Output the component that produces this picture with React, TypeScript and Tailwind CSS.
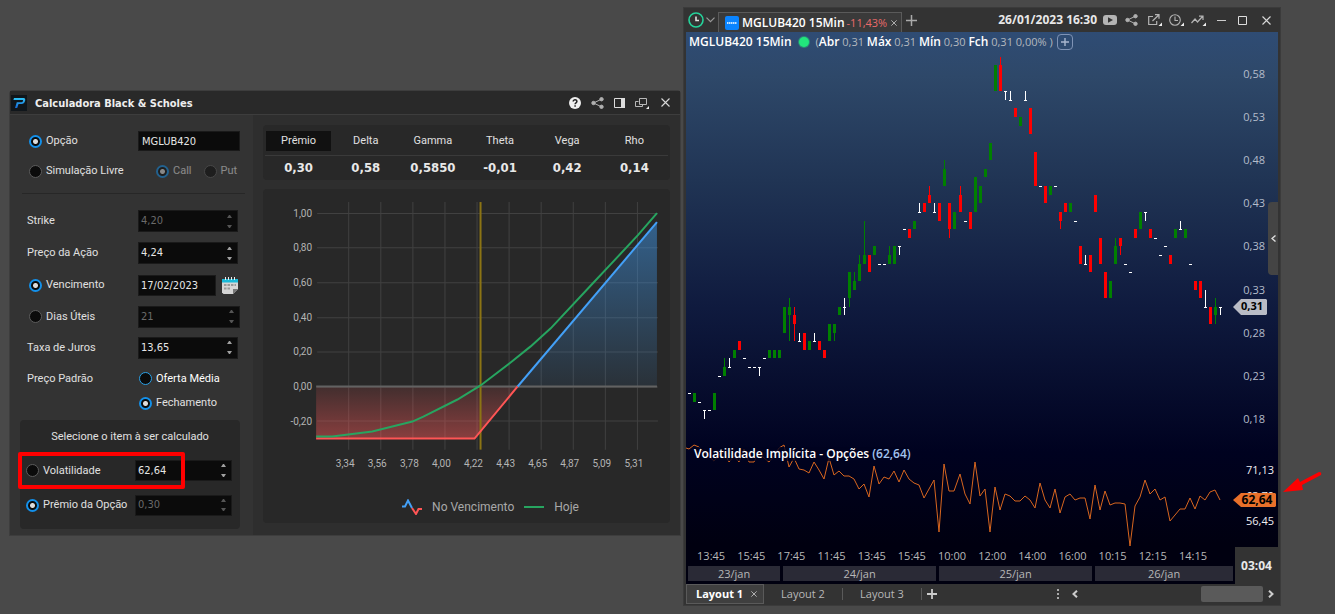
import { useState, ReactNode } from "react";
import clsx from "clsx";

const METRICS = [
  ["Prêmio", "0,30"],
  ["Delta", "0,58"],
  ["Gamma", "0,5850"],
  ["Theta", "-0,01"],
  ["Vega", "0,42"],
  ["Rho", "0,14"],
];

// open, high, low, close (in cents)
const CANDLES = [
  [21, 21, 21, 21], [20, 21, 20, 21], [20, 20, 20, 20], [19, 19, 18, 19], [19, 19, 19, 19],
  [19, 21, 19, 21], [23, 23, 23, 23], [23, 25, 23, 24], [24, 25, 24, 24], [25, 26, 25, 26],
  [27, 27, 26, 26], [25, 25, 25, 25], [24, 24, 24, 24], [24, 24, 24, 24], [24, 24, 23, 24],
  [25, 25, 25, 25], [25, 26, 25, 26], [25, 26, 25, 26], [25, 26, 25, 26], [28, 31, 28, 31],
  [30, 32, 27, 31], [30, 31, 27, 29], [27, 28, 27, 27], [28, 28, 26, 26], [26, 27, 26, 27],
  [27, 28, 27, 27], [27, 27, 26, 26], [26, 26, 25, 25], [27, 29, 27, 29], [28, 29, 27, 29],
  [30, 31, 30, 31], [31, 32, 30, 31], [32, 35, 31, 35], [33, 35, 33, 34], [34, 37, 34, 36],
  [36, 41, 36, 37], [37, 37, 35, 35], [37, 38, 37, 38], [36, 36, 36, 36], [36, 36, 36, 36],
  [36, 38, 36, 37], [36, 38, 36, 38], [38, 38, 37, 38], [40, 40, 40, 40], [40, 40, 39, 39],
  [40, 41, 40, 41], [42, 43, 42, 42], [43, 43, 42, 42], [44, 45, 43, 43], [42, 43, 42, 42],
  [43, 43, 41, 41], [45, 48, 45, 47], [43, 43, 39, 40], [40, 42, 40, 42], [44, 45, 42, 42],
  [41, 41, 41, 41], [42, 42, 40, 40], [42, 46, 42, 46], [43, 45, 43, 45], [46, 47, 46, 47],
  [48, 50, 48, 50], [56, 59, 56, 59], [59, 60, 56, 56], [56, 56, 55, 56], [55, 56, 55, 55],
  [54, 54, 53, 53], [52, 53, 52, 53], [55, 56, 55, 55], [54, 54, 51, 51], [49, 49, 45, 45],
  [45, 45, 45, 45], [45, 45, 43, 43], [44, 45, 44, 45], [45, 45, 45, 45], [42, 42, 40, 41],
  [43, 43, 42, 42], [42, 43, 42, 43], [41, 41, 41, 41], [38, 38, 36, 36], [36, 37, 36, 36],
  [37, 37, 35, 35], [44, 44, 42, 42], [39, 39, 36, 36], [35, 35, 32, 32], [32, 34, 32, 34],
  [36, 39, 36, 38], [39, 39, 37, 38], [36, 36, 36, 36], [35, 35, 35, 35], [40, 40, 39, 39],
  [40, 42, 40, 42], [42, 42, 41, 42], [40, 40, 39, 39], [39, 39, 39, 39], [37, 37, 37, 37],
  [38, 38, 38, 38], [37, 37, 36, 36], [39, 40, 39, 40], [40, 41, 40, 40], [39, 40, 39, 40],
  [36, 36, 36, 36], [34, 34, 33, 33], [34, 34, 32, 32], [31, 33, 31, 31], [31, 31, 29, 29],
  [30, 32, 29, 31], [31, 31, 30, 31],
];

const VOLATILITY =
  "686,448 689,449 694,445 699,447 704,452 714,461 719,455 724,452 729,462 734,456 739,462 744,449 749,462 754,462 759,452 764,458 769,462 774,456 779,448 784,445 789,467 794,458 799,469 804,470 809,473 814,462 819,470 824,479 829,458 834,475 839,471 844,476 849,476 854,479 859,489 864,484 869,497 874,466 879,484 884,477 889,479 894,471 899,482 904,470 909,479 914,483 919,485 924,498 929,489 934,480 939,532 944,464 949,491 954,491 960,474 965,494 970,504 975,462 980,496 985,489 990,532 995,487 1000,510 1005,494 1010,496 1015,501 1020,501 1025,496 1030,500 1035,508 1040,483 1045,500 1050,508 1055,489 1060,513 1065,497 1070,494 1075,500 1080,498 1085,498 1090,519 1095,485 1100,510 1105,491 1110,505 1115,503 1120,503 1125,504 1130,546 1135,506 1140,497 1145,480 1150,494 1155,489 1160,500 1165,497 1170,521 1180,509 1185,509 1190,498 1195,509 1200,496 1205,500 1210,492 1215,490 1220,500";

const PRICE_TICKS = [58, 53, 48, 43, 38, 33, 28, 23, 18];
const TIMES = [
  "13:45", "15:45", "17:45", "11:45", "13:45", "15:45", "10:00",
  "12:00", "14:00", "16:00", "10:15", "12:15", "14:15",
];

const priceY = (cents: number) => Math.round(74 + (58 - cents) * 8.62);
const slotX = (i: number) => (i < 54 ? 689 : 690) + i * 5;

function Radio({
  name,
  label,
  checked,
  onChange,
  disabled,
  highlight,
}: {
  name: string;
  label: string;
  checked: boolean;
  onChange?: () => void;
  disabled?: boolean;
  highlight?: boolean;
}) {
  return (
    <label className={clsx("flex items-center gap-1 whitespace-nowrap", disabled && "opacity-50", highlight && "text-white")}>
      <input
        type="radio"
        name={name}
        checked={checked}
        disabled={disabled}
        onChange={() => onChange?.()}
        className={clsx(
          "size-[13px] shrink-0 appearance-none rounded-full border bg-[#0b0b0b] checked:border-2 checked:border-[#1390ea] checked:bg-[radial-gradient(circle,#dcdcdc_0_2px,#0b0b0b_3px)]",
          highlight ? "border-[#2aa0e6]" : "border-[#5c5c5c]"
        )}
      />
      {label}
    </label>
  );
}

function NumberField({
  label,
  value,
  disabled,
  className,
}: {
  label: string;
  value: string;
  disabled?: boolean;
  className?: string;
}) {
  const [text, setText] = useState(value);

  function step(delta: number) {
    const n = parseFloat(text.replace(",", ".")) + delta;
    setText(n.toFixed(2).replace(".", ","));
  }

  return (
    <div className={clsx("flex border border-[#1a1a1a] bg-[#0b0b0b] font-['DejaVu_Sans_Condensed','DejaVu_Sans',sans-serif]", className)}>
      <input
        aria-label={label}
        value={text}
        disabled={disabled}
        onChange={(e) => setText(e.target.value)}
        className="w-full min-w-0 bg-transparent pl-0.5 text-[#e6e6e6] outline-none disabled:text-[#6a6a6a]"
      />
      <div className={clsx("flex w-4 shrink-0 flex-col", disabled ? "text-[#555]" : "text-[#a0a0a0]")}>
        <button type="button" aria-label={`Aumentar ${label}`} disabled={disabled} onClick={() => step(0.01)} className="flex flex-1 items-center justify-center">
          <svg width="5" height="3" viewBox="0 0 5 3" fill="currentColor"><path d="M0 3h5L3 0H2z" /></svg>
        </button>
        <button type="button" aria-label={`Diminuir ${label}`} disabled={disabled} onClick={() => step(-0.01)} className="flex flex-1 items-center justify-center">
          <svg width="5" height="3" viewBox="0 0 5 3" fill="currentColor"><path d="M0 0h5L3 3H2z" /></svg>
        </button>
      </div>
    </div>
  );
}

function IconButton({ label, className, children }: { label: string; className?: string; children: ReactNode }) {
  return (
    <button type="button" aria-label={label} className={clsx("flex shrink-0 items-center justify-center", className)}>
      {children}
    </button>
  );
}

function ShareIcon() {
  return (
    <svg width="13" height="12" viewBox="0 0 13 12" fill="#b0b0b0" stroke="#b0b0b0">
      <path d="M10.5 2.2 2.5 6l8 3.8" fill="none" />
      <circle cx="10.5" cy="2.2" r="1.7" />
      <circle cx="2.5" cy="6" r="1.7" />
      <circle cx="10.5" cy="9.8" r="1.7" />
    </svg>
  );
}

function CloseIcon({ size = 9 }: { size?: number }) {
  return (
    <svg width={size} height={size} viewBox="0 0 9 9" stroke="#d8d8d8" strokeWidth="1.1">
      <path d="M.5.5l8 8M8.5.5l-8 8" />
    </svg>
  );
}

function PayoffChart() {
  const xs = [348, 380, 412, 444, 476, 508, 540, 572, 604, 636];
  const xLabels = ["3,34", "3,56", "3,78", "4,00", "4,22", "4,43", "4,65", "4,87", "5,09", "5,31"];
  const ys = [213, 247, 282, 317, 351, 386, 420];
  const yLabels = ["1,00", "0,80", "0,60", "0,40", "0,20", "0,00", "-0,20"];
  return (
    <svg viewBox="263 189 406 288" className="block h-auto w-full" role="img" aria-label="Prêmio por preço da ação">
      <defs>
        <linearGradient id="loss" x1="0" y1="0" x2="0" y2="1">
          <stop offset="0" stopColor="#ff5a5a" stopOpacity="0.12" />
          <stop offset="1" stopColor="#ff5a5a" stopOpacity="0.45" />
        </linearGradient>
        <linearGradient id="gain" x1="0" y1="0" x2="0" y2="1">
          <stop offset="0" stopColor="#3f9df5" stopOpacity="0.48" />
          <stop offset="1" stopColor="#3f9df5" stopOpacity="0.08" />
        </linearGradient>
      </defs>
      {xs.map((x) => (
        <path key={x} d={`M${x + 0.5} 202V449`} stroke="#414141" />
      ))}
      {ys.map((y) => (
        <path key={y} d={`M317 ${y + 0.5}H657`} stroke="#414141" />
      ))}
      <path d="M316 386V438H474L517 386z" fill="url(#loss)" />
      <path d="M517 386 656 222V386z" fill="url(#gain)" />
      <path d="M316 386H656" stroke="#626262" strokeWidth="2" />
      <path d="M480 202V449" stroke="#8c7414" strokeWidth="2" />
      <path d="M316 438H474L517 386" fill="none" stroke="#ff5555" strokeWidth="2" />
      <path d="M517 386 656 222" stroke="#43a0f7" strokeWidth="2" />
      <path
        d="M316 436H332L372 431 412 421 423 416 457 399 480 385 510 362 530 346 550 328 593 282 610 264 637 235 656 213"
        fill="none"
        stroke="#27a560"
        strokeWidth="2"
      />
      <g className="fill-[#b4b4b4] text-[10px]">
        {ys.map((y, i) => (
          <text key={y} x="312" y={y + 4} textAnchor="end">{yLabels[i]}</text>
        ))}
        {xs.map((x, i) => (
          <text key={x} x={x - 3} y="466" textAnchor="middle">{xLabels[i]}</text>
        ))}
      </g>
    </svg>
  );
}

function Calculator() {
  const [source, setSource] = useState("opcao");
  const [term, setTerm] = useState("vencimento");
  const [base, setBase] = useState("fechamento");
  const [target, setTarget] = useState("premio");
  const [metric, setMetric] = useState("Prêmio");

  return (
    <section className="mt-[90px] rounded-t-sm border border-[#3d3d3d] bg-[#2e2e2e] font-[Roboto,sans-serif] text-[11px] leading-4 text-[#e0e0e0]">
      <header className="flex h-6 items-center gap-2 border-b border-[#3d3d3d] bg-[#292929] pr-2.5 pl-px">
        <svg width="16" height="16" viewBox="0 0 16 16">
          <defs>
            <linearGradient id="logo" x1="0" y1="0" x2="0" y2="1">
              <stop offset="0" stopColor="#2fc4f5" />
              <stop offset="1" stopColor="#1668d8" />
            </linearGradient>
          </defs>
          <rect width="16" height="16" fill="#10161b" />
          <path d="M3 3h9.500c1.600 0 2 1.400 1.600 2.800-.6 2.200-1.700 3.200-3.600 3.200H7.500L6.200 13H4l1.800-5.800h4.800c.8 0 1.200-.5 1.400-1.200.2-.7 0-1-.7-1H2.400z" fill="url(#logo)" />
        </svg>
        <h1 className="mr-auto pt-0.5 font-['DejaVu_Sans_Condensed','DejaVu_Sans',sans-serif] text-[11px] font-bold text-[#eee]">
          Calculadora Black &amp; Scholes
        </h1>
        <IconButton label="Ajuda" className="mr-0.5">
          <svg width="12" height="12" viewBox="0 0 12 12">
            <circle cx="6" cy="6" r="6" fill="#eee" />
            <path d="M4.200 4.600c0-2.400 3.700-2.300 3.700 0 0 1.300-1.800 1.300-1.800 2.600M6.100 8.300v1.400" fill="none" stroke="#222" strokeWidth="1.500" />
          </svg>
        </IconButton>
        <IconButton label="Compartilhar" className="mr-0.5"><ShareIcon /></IconButton>
        <IconButton label="Painel lateral" className="mr-0.5">
          <svg width="11" height="10" viewBox="0 0 11 10">
            <path d="M.5.5h10v9H.5z" fill="none" stroke="#ddd" />
            <path d="M7 0h4v10H7z" fill="#ddd" />
          </svg>
        </IconButton>
        <IconButton label="Duplicar" className="mr-1">
          <svg width="14" height="12" viewBox="0 0 14 12" fill="none" stroke="#b8b8b8">
            <path d="M3.500 4.500h-3v5h7v-2M4.500 1.500h7v6h-7z" />
            <path d="M14 9v3h-3z" fill="#eee" stroke="none" />
          </svg>
        </IconButton>
        <IconButton label="Fechar"><CloseIcon /></IconButton>
      </header>

      <div className="flex">
        <div className="w-[243px] shrink-0 bg-[#333] pt-2.5 pb-1">
          <div className="flex h-8 items-center pl-[19px]">
            <div className="w-[109px]">
              <Radio name="source" label="Opção" checked={source === "opcao"} onChange={() => setSource("opcao")} />
            </div>
            <input
              aria-label="Ativo"
              defaultValue="MGLUB420"
              className="h-5 w-[102px] border border-[#1a1a1a] bg-[#0b0b0b] pl-[3px] font-['DejaVu_Sans_Condensed','DejaVu_Sans',sans-serif] text-[#e6e6e6] outline-none"
            />
          </div>
          <div className="flex h-7 items-center pl-[19px]">
            <div className="w-[127px]">
              <Radio name="source" label="Simulação Livre" checked={source === "livre"} onChange={() => setSource("livre")} />
            </div>
            <div className="flex gap-3">
              <Radio name="side" label="Call" checked disabled />
              <Radio name="side" label="Put" checked={false} disabled />
            </div>
          </div>
          <hr className="mt-2 mr-2 mb-[11px] ml-3 border-[#272727]" />

          <div className="flex h-8 items-center pl-[17px]">
            <span className="w-[111px]">Strike</span>
            <NumberField label="Strike" value="4,20" disabled className="h-[22px] w-[100px]" />
          </div>
          <div className="flex h-8 items-center pl-[17px]">
            <span className="w-[111px]">Preço da Ação</span>
            <NumberField label="Preço da Ação" value="4,24" className="h-[22px] w-[100px]" />
          </div>
          <div className="flex h-8 items-center pl-[19px]">
            <div className="w-[109px]">
              <Radio name="term" label="Vencimento" checked={term === "vencimento"} onChange={() => setTerm("vencimento")} />
            </div>
            <input
              aria-label="Data de vencimento"
              defaultValue="17/02/2023"
              className="h-[21px] w-[78px] border border-[#1a1a1a] bg-[#0b0b0b] pl-0.5 font-['DejaVu_Sans_Condensed','DejaVu_Sans',sans-serif] text-[#e6e6e6] outline-none"
            />
            <IconButton label="Abrir calendário" className="ml-1.5">
              <svg width="16" height="17" viewBox="0 0 16 17">
                <path d="M0 5h16v7l-5 5H1.500L0 15.500z" fill="#d6d6d6" />
                <path d="M11 17v-5h5z" fill="#777" />
                <path d="M0 2h16v3.500H0z" fill="#19b9d8" />
                <path d="M3.500 0v3M6.500 0v3M9.500 0v3M12.500 0v3" stroke="#eee" />
                <path d="M2 7h2.500v2H2zM5.500 7H8v2H5.500zM9 7h2.500v2H9zM12.500 7H14v2h-1.500zM2 10.500h2.500v2H2zM5.500 10.500H8v2H5.500z" fill="#999" />
              </svg>
            </IconButton>
          </div>
          <div className="flex h-[31px] items-center pl-[19px]">
            <div className="w-[109px]">
              <Radio name="term" label="Dias Úteis" checked={term === "dias"} onChange={() => setTerm("dias")} />
            </div>
            <NumberField label="Dias Úteis" value="21" disabled className="h-[22px] w-[102px]" />
          </div>
          <div className="flex h-[31px] items-center pl-[17px]">
            <span className="w-[111px]">Taxa de Juros</span>
            <NumberField label="Taxa de Juros" value="13,65" className="h-[22px] w-[100px]" />
          </div>
          <div className="flex h-[31px] items-center pl-[17px]">
            <span className="w-[112px]">Preço Padrão</span>
            <Radio name="base" label="Oferta Média" highlight checked={base === "oferta"} onChange={() => setBase("oferta")} />
          </div>
          <div className="flex h-[18px] items-center pl-[129px]">
            <Radio name="base" label="Fechamento" checked={base === "fechamento"} onChange={() => setBase("fechamento")} />
          </div>

          <div className="mt-2 ml-2.5 w-[220px] rounded-sm bg-[#282828] pb-1.5">
            <p className="flex h-[34px] items-center justify-center">Selecione o item à ser calculado</p>
            <div className="relative flex h-[33px] items-center pl-1.5">
              <div className="w-[109px]">
                <Radio name="target" label="Volatilidade" checked={target === "vol"} onChange={() => setTarget("vol")} />
              </div>
              <NumberField label="Volatilidade" value="62,64" className="h-[21px] w-[97px]" />
              <div className="pointer-events-none absolute -top-0.5 -left-0.5 h-[37px] w-[167px] rounded-xs border-4 border-[#ff0000]" />
            </div>
            <div className="flex h-9 items-center pl-1.5">
              <div className="w-[109px]">
                <Radio name="target" label="Prêmio da Opção" checked={target === "premio"} onChange={() => setTarget("premio")} />
              </div>
              <NumberField label="Prêmio da Opção" value="0,30" disabled className="h-[21px] w-[97px]" />
            </div>
          </div>
        </div>

        <div className="flex min-w-0 flex-1 flex-col gap-[9px] px-2.5 pt-2.5 pb-3">
          <div className="rounded-sm bg-[#282828] px-0.5 pt-1.5">
            <table className="w-full table-fixed text-center">
              <thead>
                <tr className="border-b border-[#3a3a3a]">
                  {METRICS.map(([name]) => (
                    <th key={name} className="px-px pb-1 font-normal">
                      <button
                        type="button"
                        onClick={() => setMetric(name)}
                        className={clsx("block h-5 w-full", metric === name && "bg-[#111]")}
                      >
                        {name}
                      </button>
                    </th>
                  ))}
                </tr>
              </thead>
              <tbody>
                <tr>
                  {METRICS.map(([name, value]) => (
                    <td key={name} className="h-6 font-['DejaVu_Sans_Condensed','DejaVu_Sans',sans-serif] text-[13px] font-bold text-[#e8e8e8]">
                      {value}
                    </td>
                  ))}
                </tr>
              </tbody>
            </table>
          </div>

          <div className="rounded-sm bg-[#282828] pb-1.5">
            <PayoffChart />
            <div className="mt-5 flex h-5 items-center justify-center pl-12 text-[12px] text-[#a8a8a8]">
              <svg width="20" height="16" viewBox="0 0 20 16" fill="none" strokeWidth="2">
                <path d="M0 7.500h3L6 1.500 10 9" stroke="#43a0f7" />
                <path d="M10 9l4 6 2.500-5H20" stroke="#ff5555" />
              </svg>
              <span className="ml-2.5">No Vencimento</span>
              <svg width="20" height="2" className="ml-2.5"><path d="M0 1h20" stroke="#27a560" strokeWidth="2" /></svg>
              <span className="ml-2.5">Hoje</span>
            </div>
          </div>
        </div>
      </div>
    </section>
  );
}

function PriceChart() {
  return (
    <svg viewBox="686 52 592 495" className="block h-auto w-full" role="img" aria-label="Candles MGLUB420 e volatilidade implícita">
      {CANDLES.map(([open, high, low, close], i) => {
        const x = slotX(i);
        const color = close > open ? "#008000" : close < open ? "#ff0000" : "#ffffff";
        const top = priceY(Math.max(open, close));
        const height = Math.max(1, priceY(Math.min(open, close)) - top);
        return (
          <g key={i} fill={color}>
            {high > low && <rect x={x} y={priceY(high)} width="1" height={priceY(low) - priceY(high)} />}
            <rect x={x - 1} y={top} width="3" height={height} />
          </g>
        );
      })}
      <g className="fill-[#b4bccb] text-[11px]">
        {PRICE_TICKS.map((p) => (
          <text key={p} x="1265" y={priceY(p) + 4} textAnchor="end">{`0,${p}`}</text>
        ))}
      </g>
      <path d="M1233 307 1241 299H1266L1267 300V314L1266 315H1241z" fill="#b9bcc6" />
      <text x="1252" y="310" textAnchor="middle" className="fill-black text-[11px] font-bold">0,31</text>

      <polyline points={VOLATILITY} fill="none" stroke="#d8661f" />
      <rect x="694" y="447" width="216" height="14" fill="#00021f" fillOpacity="0.8" />
      <text x="694" y="458" className="fill-white text-[12px] font-semibold">
        Volatilidade Implícita - Opções <tspan className="fill-[#a3c4ee]">(62,64)</tspan>
      </text>
      <g className="fill-[#eeeef2] text-[11px] font-medium">
        <text x="1274" y="474" textAnchor="end">71,13</text>
        <text x="1274" y="500" textAnchor="end">63,79</text>
        <text x="1274" y="525" textAnchor="end">56,45</text>
      </g>
      <path d="M1233 500 1241 493H1275L1276 494V506L1275 507H1241z" fill="#e8702a" />
      <text x="1257" y="504" textAnchor="middle" className="fill-black text-[12px] font-bold">62,64</text>
    </svg>
  );
}

function ChartWindow() {
  return (
    <section className="mt-[7px] border border-[#3b3b3b] bg-[#333] px-0.5 pb-px font-['Open_Sans','Noto_Sans',sans-serif] text-[12px] leading-4 text-[#b8b8b8]">
      <header className="flex h-6 items-center">
        <IconButton label="Conexão" className="ml-0.5">
          <svg width="16" height="16" viewBox="0 0 16 16" fill="none">
            <circle cx="8" cy="8" r="7" stroke="#25d39b" strokeWidth="1.600" />
            <path d="M8 4.500V8.500H11" stroke="#e0e0e0" strokeWidth="1.600" />
          </svg>
        </IconButton>
        <IconButton label="Mais ativos" className="ml-0.5">
          <svg width="9" height="6" viewBox="0 0 9 6" fill="none" stroke="#999" strokeWidth="1.200"><path d="M.5.7l4 4 4-4" /></svg>
        </IconButton>
        <div className="ml-[3px] flex h-5 w-[184px] shrink-0 items-center self-end border border-b-0 border-[#5a5a5a] bg-[#3a3a3a] pl-1.5 whitespace-nowrap">
          <svg width="14" height="14" viewBox="0 0 14 14" className="mr-[3px] shrink-0">
            <rect width="14" height="14" rx="2" fill="#0a84ff" />
            <path d="M2 7h10" stroke="#fff" strokeWidth="1.500" strokeDasharray="1.500 .5" />
          </svg>
          <span className="font-semibold text-white">MGLUB420 15Min</span>
          <span className="ml-0.5 text-[11px] text-[#e86a6a]">-11,43%</span>
          <IconButton label="Fechar aba" className="mr-1 ml-auto"><CloseIcon size={6} /></IconButton>
        </div>
        <IconButton label="Nova aba" className="ml-1">
          <svg width="11" height="11" viewBox="0 0 11 11" stroke="#aaa" strokeWidth="1.500"><path d="M5.500 0v11M0 5.500h11" /></svg>
        </IconButton>
        <span className="mr-1.5 ml-auto font-bold whitespace-nowrap text-[#e8e8e8]">26/01/2023 16:30</span>
        <IconButton label="Vídeo" className="mr-2">
          <svg width="14" height="10" viewBox="0 0 14 10"><rect width="14" height="10" rx="3" fill="#b4b4b4" /><path d="M5 2.200v5.600L10 5z" fill="#333" /></svg>
        </IconButton>
        <IconButton label="Compartilhar" className="mr-2.5"><ShareIcon /></IconButton>
        <IconButton label="Abrir em nova janela" className="mr-[7px]">
          <svg width="14" height="12" viewBox="0 0 14 12" fill="none" stroke="#b4b4b4" strokeWidth="1.200">
            <path d="M5 2.500H.7v8h8V7M7 .7h4v4M11 .7 4.500 7" />
            <path d="M14 8.500V12h-3.500z" fill="#eee" stroke="none" />
          </svg>
        </IconButton>
        <IconButton label="Periodicidade" className="mr-1.5">
          <svg width="16" height="12" viewBox="0 0 16 12" fill="none" stroke="#b4b4b4" strokeWidth="1.100">
            <circle cx="6" cy="6" r="5.300" />
            <path d="M6 2.500V6.500H9" />
            <path d="M15 8.500V12h-3.500z" fill="#eee" stroke="none" />
          </svg>
        </IconButton>
        <IconButton label="Indicadores" className="mr-[11px]">
          <svg width="15" height="11" viewBox="0 0 15 11" fill="none" stroke="#b4b4b4" strokeWidth="1.200">
            <path d="M.5 8 4 4l2.500 3L11.500 1.500M8 1.200h4V5" />
            <path d="M15 7.500V11h-3.500z" fill="#eee" stroke="none" />
          </svg>
        </IconButton>
        <IconButton label="Minimizar" className="mr-3">
          <svg width="9" height="9" viewBox="0 0 9 9" stroke="#ccc"><path d="M0 4.500h9" /></svg>
        </IconButton>
        <IconButton label="Maximizar" className="mr-[15px]">
          <svg width="9" height="9" viewBox="0 0 9 9" fill="none" stroke="#ddd"><path d="M.5.5h8v8h-8z" /></svg>
        </IconButton>
        <IconButton label="Fechar" className="mr-[7px]"><CloseIcon /></IconButton>
      </header>

      <div className="relative bg-[linear-gradient(#2f4c74,#2e4869_8%,#203454_27%,#0f1a3e_50%,#000220_76%,#000010_93%)]">
        <div className="flex h-5 items-center pl-[3px] whitespace-nowrap">
          <span className="font-semibold text-white">MGLUB420 15Min</span>
          <span className="mx-[7px] size-2.5 rounded-full bg-[#22e57c] ring-1 ring-[#22e57c]/40" />
          <span className="text-[11px] font-medium text-[#b4b8be]">
            (<b className="text-[12px] font-semibold text-white">Abr</b> 0,31 <b className="text-[12px] font-semibold text-white">Máx</b> 0,31{" "}
            <b className="text-[12px] font-semibold text-white">Mín</b> 0,30 <b className="text-[12px] font-semibold text-white">Fch</b> 0,31
            0,00% )
          </span>
          <IconButton label="Adicionar indicador" className="ml-1 size-4 rounded-sm border border-[#7f93b5]">
            <svg width="8" height="8" viewBox="0 0 8 8" stroke="#a9b7cf" strokeWidth="1.400"><path d="M4 0v8M0 4h8" /></svg>
          </IconButton>
        </div>
        <PriceChart />
        <div className="flex h-[37px]">
          <div className="min-w-0 flex-1">
            <div className="mb-px flex h-[18px] items-center pr-[22px] pl-[5px] text-[11px]">
              {TIMES.map((t, i) => (
                <span key={i} className="flex-1 text-center">{t}</span>
              ))}
            </div>
            <div className="flex gap-[3px] px-0.5 text-[11px] leading-[15px]">
              <span className="flex-[92] bg-[#2a2a36] text-center">23/jan</span>
              <span className="flex-[153] bg-[#2a2a36] text-center">24/jan</span>
              <span className="flex-[153] bg-[#2a2a36] text-center">25/jan</span>
              <span className="flex-[138] bg-[#2a2a36] text-center">26/jan</span>
            </div>
          </div>
          <div className="flex w-[43px] items-center justify-center bg-[#333] font-bold text-[#e8e8e8]">03:04</div>
        </div>
        <button
          type="button"
          aria-label="Recolher escala"
          className="absolute top-[170px] right-0 flex h-[73px] w-2.5 items-center justify-center rounded-l-sm bg-[#444]"
        >
          <svg width="5" height="7" viewBox="0 0 5 7" fill="none" stroke="#ddd" strokeWidth="1.400"><path d="M4.500.5l-3.500 3 3.500 3" /></svg>
        </button>
      </div>

      <footer className="flex h-5 items-center text-[11px]">
        <div className="flex h-5 w-[78px] items-center justify-between self-start border border-[#5a5a5a] bg-[#3f3f3f] pr-1.5 pl-[9px]">
          <button type="button" className="font-bold whitespace-nowrap text-white">Layout 1</button>
          <IconButton label="Fechar Layout 1"><CloseIcon size={6} /></IconButton>
        </div>
        <button type="button" className="w-[78px] whitespace-nowrap">Layout 2</button>
        <span className="h-3 w-px bg-[#5a5a5a]" />
        <button type="button" className="w-[78px] whitespace-nowrap">Layout 3</button>
        <span className="h-3 w-px bg-[#5a5a5a]" />
        <IconButton label="Novo layout" className="ml-[5px]">
          <svg width="10" height="10" viewBox="0 0 10 10" stroke="#ccc" strokeWidth="1.800"><path d="M5 0v10M0 5h10" /></svg>
        </IconButton>
        <svg width="2" height="10" viewBox="0 0 2 10" fill="#aaa" className="mr-[13px] ml-auto">
          <path d="M0 0h2v2H0zM0 4h2v2H0zM0 8h2v2H0z" />
        </svg>
        <IconButton label="Rolar para a esquerda">
          <svg width="6" height="8" viewBox="0 0 6 8" fill="none" stroke="#ccc" strokeWidth="2"><path d="M5 .7 1.500 4 5 7.300" /></svg>
        </IconButton>
        <span className="ml-[123px] h-4 w-[62px] rounded-xs bg-[#5a5a5a]" />
        <IconButton label="Rolar para a direita" className="mr-1 ml-[5px]">
          <svg width="6" height="8" viewBox="0 0 6 8" fill="none" stroke="#ccc" strokeWidth="2"><path d="M1 .7 4.500 4 1 7.300" /></svg>
        </IconButton>
      </footer>
    </section>
  );
}

export default function App() {
  return (
    <main className="grid min-h-screen grid-cols-[672fr_598fr_52px] items-start gap-x-0.5 bg-[#494949] pl-[9px]">
      <Calculator />
      <ChartWindow />
      <svg width="40" height="24" viewBox="0 0 40 24" className="mt-[470px]" fill="#ff0000">
        <path d="M0 22 15 8 17 12 36 2Q39 2 38 5L19 15 20 20z" />
      </svg>
    </main>
  );
}
